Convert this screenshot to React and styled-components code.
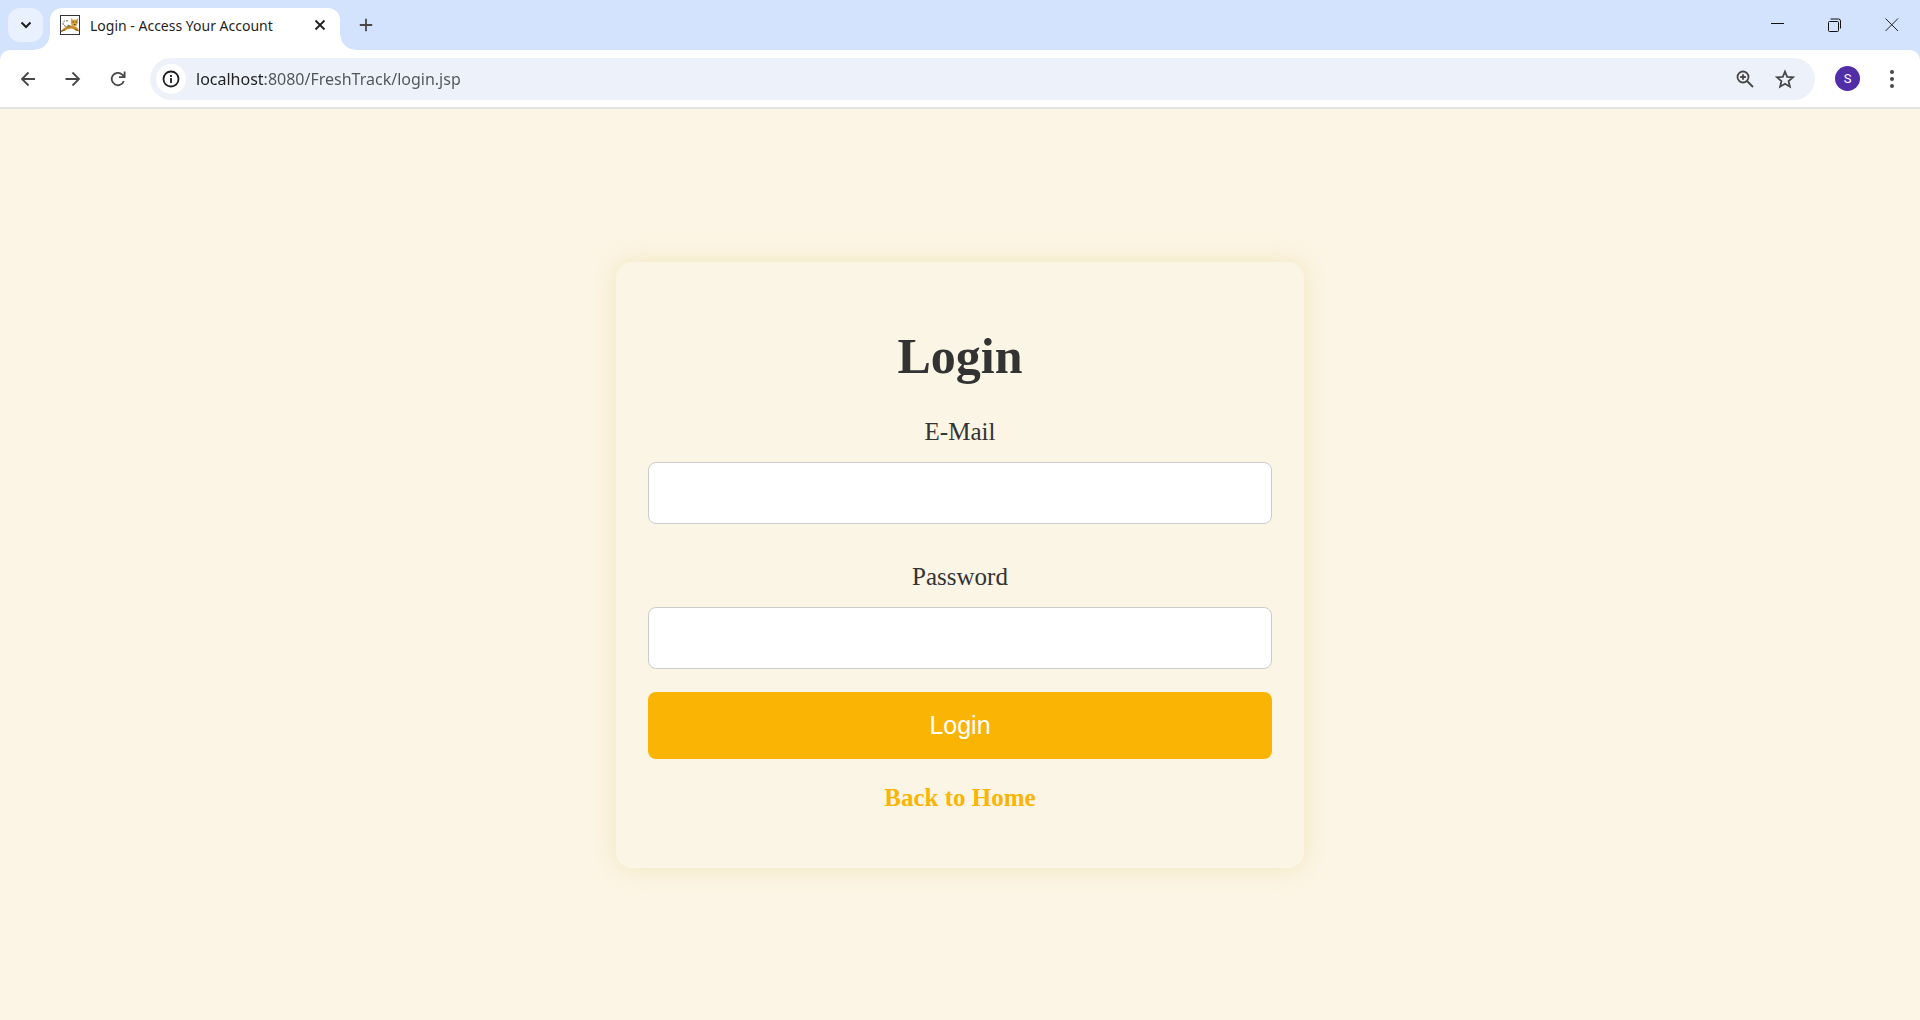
import React from "react";
import styled, { createGlobalStyle } from "styled-components";

const GlobalStyle = createGlobalStyle`
  *, *::before, *::after { box-sizing: border-box; }
  body { margin: 0; background: #fcf5e5; }
  button, input { font: inherit; margin: 0; }
`;

const uiFont = `"Segoe UI", "Noto Sans", "Open Sans", sans-serif`;
const serifFont = `"Times New Roman", "Liberation Serif", serif`;

const Window = styled.div`
  display: flex;
  flex-direction: column;
  min-height: 100vh;
`;

const Chrome = styled.header`
  background: #d3e3fd;
  font-family: ${uiFont};
`;

const TabStrip = styled.div`
  display: flex;
  align-items: flex-start;
  height: 50px;
  padding: 8px 0 0 8px;
`;

const TabSearch = styled.button`
  display: flex;
  align-items: center;
  justify-content: center;
  width: 35px;
  height: 34px;
  margin-right: 7px;
  padding: 0;
  border: 0;
  border-radius: 12px;
  background: #e9f0fe;
  color: #1f1f1f;
`;

const Tab = styled.div`
  position: relative;
  display: flex;
  align-items: center;
  width: 290px;
  height: 42px;
  padding: 0 8px 8px 10px;
  border-radius: 12px 12px 0 0;
  background: #fff;

  &::before,
  &::after {
    content: "";
    position: absolute;
    bottom: 0;
    width: 15px;
    height: 15px;
  }
  &::before {
    right: 100%;
    background: radial-gradient(circle at 0 0, transparent 14px, #fff 15px);
  }
  &::after {
    left: 100%;
    background: radial-gradient(circle at 100% 0, transparent 14px, #fff 15px);
  }
`;

const TabTitle = styled.span`
  flex: 1;
  margin-left: 10px;
  padding-top: 1px;
  color: #1f1f1f;
  font-size: 14px;
  line-height: 20px;
  white-space: nowrap;
`;

const IconButton = styled.button`
  display: flex;
  align-items: center;
  justify-content: center;
  flex: none;
  width: ${(p) => p.$width || 24}px;
  height: ${(p) => p.$height || 34}px;
  padding: 0;
  border: 0;
  background: transparent;
  color: ${(p) => p.$color || "#474747"};
`;

const WindowControls = styled.div`
  display: flex;
  margin-left: auto;
`;

const Toolbar = styled.div`
  display: flex;
  align-items: center;
  height: 59px;
  padding: 0 12px 0 5px;
  border-bottom: 2px solid #dfe3e1;
  border-radius: 10px 10px 0 0;
  background: #fff;
`;

const AddressBar = styled.div`
  display: flex;
  align-items: center;
  flex: 1;
  height: 42px;
  margin: 0 20px 0 10px;
  padding: 0 10px 0 6px;
  border-radius: 21px;
  background: #ecf1fa;
`;

const SiteInfo = styled(IconButton)`
  border-radius: 50%;
  background: #fff;
`;

const UrlInput = styled.input`
  flex: 1;
  min-width: 0;
  height: 28px;
  margin-left: 10px;
  padding: 1px 0 0;
  border: 0;
  outline: 0;
  background: linear-gradient(90deg, #1f1f1f 68px, #505357 68px);
  background-clip: text;
  -webkit-background-clip: text;
  -webkit-text-fill-color: transparent;
  color: #505357;
  font-size: 16px;
  line-height: 26px;
`;

const Avatar = styled.button`
  width: 25px;
  height: 25px;
  margin-right: 16px;
  padding: 0;
  border: 0;
  border-radius: 50%;
  background: #512da8;
  color: #fff;
  font-family: Roboto, sans-serif;
  font-size: 13px;
  line-height: 25px;
  text-align: center;
`;

const Page = styled.main`
  display: flex;
  flex: 1;
  align-items: center;
  justify-content: center;
  padding: 24px;
  font-family: ${serifFont};
  font-size: 25px;
  line-height: 28px;
`;

const Card = styled.form`
  display: flex;
  flex-direction: column;
  width: 100%;
  max-width: 688px;
  padding: 66px 32px 56px;
  border-radius: 16px;
  background: #fbf5e5;
  box-shadow: 0 0 25px rgba(218, 200, 90, 0.3);
  color: #333;
  text-align: center;
`;

const Title = styled.h1`
  margin: 0 0 34px;
  font-size: 50px;
  line-height: 56px;
`;

const Field = styled.div`
  display: flex;
  flex-direction: column;
  gap: 16px;
  & + & {
    margin-top: 39px;
  }
`;

const TextInput = styled.input`
  width: 100%;
  height: 62px;
  padding: 0 16px;
  border: 1px solid #ccc;
  border-radius: 8px;
  background: #fff;
`;

const Submit = styled.button`
  height: 67px;
  margin: 23px 0 25px;
  border: 0;
  border-radius: 8px;
  background: #fab403;
  color: #fff;
  font-family: Arial, "Liberation Sans", sans-serif;
`;

const HomeLink = styled.a`
  align-self: center;
  color: #fab403;
  font-weight: bold;
  text-decoration: none;
`;

function Icon({ size = 20, stroke = 2, children }) {
  return (
    <svg
      width={size}
      height={size}
      viewBox={`0 0 ${size} ${size}`}
      fill="none"
      stroke="currentColor"
      strokeWidth={stroke}
      aria-hidden="true"
    >
      {children}
    </svg>
  );
}

function Favicon() {
  return (
    <svg width="20" height="20" viewBox="0 0 20 20" aria-hidden="true">
      <rect x="0.5" y="0.5" width="19" height="19" fill="#fff" stroke="#333" />
      <path d="M8 6C5 5 2.500 6.500 3 9s3 1.500 4 3.500" fill="none" stroke="#666" strokeDasharray="2 1" />
      <path d="M1 16.500c1-2.500 3-3.500 5-4.500l5-1.500 5 1.500c2 1 2.500 2.500 3 4l-3-.5-4-2-4 .5-3 1.500z" fill="#c98a2b" />
      <path d="M11 3l2 1.800h3L18.200 3l-.4 5-1.300 3-2.500 1.200-2.500-1.700-.7-3z" fill="#d9a441" />
      <path d="M6 12l2.500-2.500L11 11l-2 1.500z" fill="#8b7a58" />
      <path d="M12.500 7H14M15.500 7H17M13.800 9.500h1.700" stroke="#5a421b" />
      <path d="M1 16.500l4-1.500M15 14.500l3.500 1.500" stroke="#7a5420" />
    </svg>
  );
}

export default function App() {
  return (
    <Window>
      <GlobalStyle />
      <Chrome>
        <TabStrip>
          <TabSearch type="button" aria-label="Search tabs">
            <Icon size={12}><path d="M1.500 3.500 6 8l4.500-4.500" /></Icon>
          </TabSearch>
          <Tab>
            <Favicon />
            <TabTitle>Login - Access Your Account</TabTitle>
            <IconButton type="button" aria-label="Close tab" $color="#1f1f1f">
              <Icon size={12} stroke={1.8}><path d="M1.500 1.500l9 9M10.500 1.500l-9 9" /></Icon>
            </IconButton>
          </Tab>
          <IconButton type="button" aria-label="New tab" $width={52}>
            <Icon size={14} stroke={1.8}><path d="M7 .8v12.400M.8 7h12.400" /></Icon>
          </IconButton>
          <WindowControls>
            <IconButton type="button" aria-label="Minimize" $width={57} $color="#111">
              <Icon size={14} stroke={1}><path d="M0 5.500h13" /></Icon>
            </IconButton>
            <IconButton type="button" aria-label="Restore" $width={57} $color="#111">
              <Icon size={14} stroke={1}>
                <rect x=".5" y="3.500" width="10" height="10" rx="1" />
                <path d="M2.500 1H10.500q2 0 2 2v7.500" />
              </Icon>
            </IconButton>
            <IconButton type="button" aria-label="Close window" $width={57} $color="#222">
              <Icon size={14} stroke={1}><path d="M.5 .5l12.500 12.500M13 .5L.5 13" /></Icon>
            </IconButton>
          </WindowControls>
        </TabStrip>
        <Toolbar>
          <IconButton type="button" aria-label="Back" $width={45}>
            <Icon size={16} stroke={1.8}><path d="M15 8H2M8.500 1.500 2 8l6.500 6.500" /></Icon>
          </IconButton>
          <IconButton type="button" aria-label="Forward" $width={45}>
            <Icon size={16} stroke={1.8}><path d="M.5 8H14M7.500 1.500 14 8l-6.500 6.500" /></Icon>
          </IconButton>
          <IconButton type="button" aria-label="Reload" $width={45}>
            <Icon size={16} stroke={1.8}>
              <path d="M13.800 10A6.200 6.200 0 1 1 12.300 3.600L14.500 6M14.600 .5v5.600H9" />
            </Icon>
          </IconButton>
          <AddressBar>
            <SiteInfo type="button" aria-label="View site information" $width={30} $height={30} $color="#1f1f1f">
              <Icon size={18} stroke={1.8}><circle cx="9" cy="9" r="7.500" /><path d="M9 8v5M9 5v2" /></Icon>
            </SiteInfo>
            <UrlInput aria-label="Address" defaultValue="localhost:8080/FreshTrack/login.jsp" spellCheck={false} />
            <IconButton type="button" aria-label="Zoom" $width={40}>
              <Icon size={18} stroke={1.8}>
                <circle cx="7" cy="7" r="5.500" />
                <path d="M11 11l6 6M7 4.200v5.600M4.200 7h5.600" />
              </Icon>
            </IconButton>
            <IconButton type="button" aria-label="Bookmark this tab" $width={40}>
              <Icon size={20} stroke={1.8}>
                <path d="M10 2.600l2.200 5.200 5.800.5-4.400 3.800 1.300 5.600L10 14.700l-4.900 3 1.300-5.600L2 8.300l5.800-.5z" />
              </Icon>
            </IconButton>
          </AddressBar>
          <Avatar type="button" aria-label="Profile S">S</Avatar>
          <IconButton type="button" aria-label="Menu" $width={32}>
            <Icon size={18} stroke={0}>
              <g fill="currentColor">
                <circle cx="9" cy="2" r="2" />
                <circle cx="9" cy="9" r="2" />
                <circle cx="9" cy="16" r="2" />
              </g>
            </Icon>
          </IconButton>
        </Toolbar>
      </Chrome>
      <Page>
        <Card onSubmit={(e) => e.preventDefault()}>
          <Title>Login</Title>
          <Field>
            <label htmlFor="email">E-Mail</label>
            <TextInput id="email" type="email" />
          </Field>
          <Field>
            <label htmlFor="password">Password</label>
            <TextInput id="password" type="password" />
          </Field>
          <Submit type="submit">Login</Submit>
          <HomeLink href="#home">Back to Home</HomeLink>
        </Card>
      </Page>
    </Window>
  );
}
